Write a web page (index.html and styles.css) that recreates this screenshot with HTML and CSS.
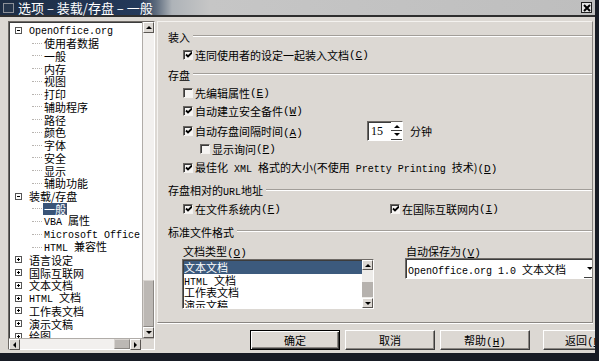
FILE: index.html
```html
<!DOCTYPE html>
<html lang="zh-CN">
<head>
  <meta charset="UTF-8" />
  <title>选项 - 装载/存盘 - 一般</title>
  <link rel="stylesheet" href="styles.css">
</head>
<body>

  <div class="window">
    <div class="titlebar">
      <span class="ticon"></span>
      <span class="ttext">选项 – 装载/存盘 – 一般</span>
      <span class="tclose">
        <svg width="8" height="8" viewBox="0 0 8 8"><path d="M1 1L7 7M7 1L1 7" stroke="#000" stroke-width="2"/></svg>
      </span>
    </div>

    <div class="client">
      <!-- Pohon kategori kiri -->
      <div class="tree">
        <div class="tree-body">
          <ul class="nodes">
            <li class="root"><svg class="exp" width="7" height="7" viewBox="0 0 7 7"><rect x=".5" y=".5" width="6" height="6" fill="#fff" stroke="#555"/><path d="M2 3.5h3" stroke="#000"/></svg><span class="t"><span class="lat">OpenOffice.org</span></span></li>
            <li class="child"><span class="ln"></span><span class="t">使用者数据</span></li>
            <li class="child"><span class="ln"></span><span class="t">一般</span></li>
            <li class="child"><span class="ln"></span><span class="t">内存</span></li>
            <li class="child"><span class="ln"></span><span class="t">视图</span></li>
            <li class="child"><span class="ln"></span><span class="t">打印</span></li>
            <li class="child"><span class="ln"></span><span class="t">辅助程序</span></li>
            <li class="child"><span class="ln"></span><span class="t">路径</span></li>
            <li class="child"><span class="ln"></span><span class="t">颜色</span></li>
            <li class="child"><span class="ln"></span><span class="t">字体</span></li>
            <li class="child"><span class="ln"></span><span class="t">安全</span></li>
            <li class="child"><span class="ln"></span><span class="t">显示</span></li>
            <li class="child"><span class="ln"></span><span class="t">辅助功能</span></li>
            <li class="root"><svg class="exp" width="7" height="7" viewBox="0 0 7 7"><rect x=".5" y=".5" width="6" height="6" fill="#fff" stroke="#555"/><path d="M2 3.5h3" stroke="#000"/></svg><span class="t">装载/存盘</span></li>
            <li class="child"><span class="ln"></span><span class="t sel">一般</span></li>
            <li class="child"><span class="ln"></span><span class="t"><span class="lat">VBA&nbsp;</span>属性</span></li>
            <li class="child"><span class="ln"></span><span class="t"><span class="lat">Microsoft Office</span></span></li>
            <li class="child"><span class="ln"></span><span class="t"><span class="lat">HTML&nbsp;</span>兼容性</span></li>
            <li class="root"><svg class="exp" width="7" height="7" viewBox="0 0 7 7"><rect x=".5" y=".5" width="6" height="6" fill="#fff" stroke="#555"/><path d="M2 3.5h3M3.5 2v3" stroke="#000"/></svg><span class="t">语言设定</span></li>
            <li class="root"><svg class="exp" width="7" height="7" viewBox="0 0 7 7"><rect x=".5" y=".5" width="6" height="6" fill="#fff" stroke="#555"/><path d="M2 3.5h3M3.5 2v3" stroke="#000"/></svg><span class="t">国际互联网</span></li>
            <li class="root"><svg class="exp" width="7" height="7" viewBox="0 0 7 7"><rect x=".5" y=".5" width="6" height="6" fill="#fff" stroke="#555"/><path d="M2 3.5h3M3.5 2v3" stroke="#000"/></svg><span class="t">文本文档</span></li>
            <li class="root"><svg class="exp" width="7" height="7" viewBox="0 0 7 7"><rect x=".5" y=".5" width="6" height="6" fill="#fff" stroke="#555"/><path d="M2 3.5h3M3.5 2v3" stroke="#000"/></svg><span class="t"><span class="lat">HTML&nbsp;</span>文档</span></li>
            <li class="root"><svg class="exp" width="7" height="7" viewBox="0 0 7 7"><rect x=".5" y=".5" width="6" height="6" fill="#fff" stroke="#555"/><path d="M2 3.5h3M3.5 2v3" stroke="#000"/></svg><span class="t">工作表文档</span></li>
            <li class="root"><svg class="exp" width="7" height="7" viewBox="0 0 7 7"><rect x=".5" y=".5" width="6" height="6" fill="#fff" stroke="#555"/><path d="M2 3.5h3M3.5 2v3" stroke="#000"/></svg><span class="t">演示文稿</span></li>
            <li class="root"><svg class="exp" width="7" height="7" viewBox="0 0 7 7"><rect x=".5" y=".5" width="6" height="6" fill="#fff" stroke="#555"/><path d="M2 3.5h3M3.5 2v3" stroke="#000"/></svg><span class="t">绘图</span></li>
          </ul>
          <div class="vscroll">
            <span class="sbtn"><i class="up"></i></span>
            <span class="vtrack"><span class="vthumb"></span></span>
            <span class="sbtn"><i class="down"></i></span>
          </div>
        </div>
        <div class="hscroll">
          <span class="sbtn"><i class="left"></i></span>
          <span class="htrack"><span class="hthumb"></span></span>
          <span class="sbtn"><i class="right"></i></span>
          <span class="corner"></span>
        </div>
      </div>

      <div class="side">
        <!-- Halaman opsi -->
        <div class="page">
          <div class="group">装入</div>
          <div class="opt"><span class="cb on"></span>连同使用者的设定一起装入文档<span class="k">(<u>C</u>)</span></div>

          <div class="group g-save">存盘</div>
          <div class="opt"><span class="cb"></span>先编辑属性<span class="k">(<u>E</u>)</span></div>
          <div class="opt"><span class="cb on"></span>自动建立安全备件<span class="k">(<u>W</u>)</span></div>
          <div class="opt o-auto">
            <span class="cb on"></span><span class="lbl">自动存盘间隔时间<span class="k">(<u>A</u>)</span></span>
            <span class="spin"><span class="val">15</span><span class="arrows"><i class="up"></i><i class="down"></i></span></span>
            <span class="unit">分钟</span>
          </div>
          <div class="opt sub"><span class="cb"></span>显示询问<span class="k">(<u>P</u>)</span></div>
          <div class="opt o-xml"><span class="cb on"></span><span class="t">最佳化<span class="lat">&nbsp;XML&nbsp;</span>格式的大小(不使用<span class="lat">&nbsp;Pretty Printing&nbsp;</span>技术)<span class="k">(<u>D</u>)</span></span></div>

          <div class="group g-url"><span class="t">存盘相对的<span class="lat">URL</span>地址</span></div>
          <div class="cols">
            <div class="opt"><span class="cb on"></span>在文件系统内<span class="k">(<u>F</u>)</span></div>
            <div class="opt"><span class="cb on"></span>在国际互联网内<span class="k">(<u>I</u>)</span></div>
          </div>

          <div class="group g-std">标准文件格式</div>
          <div class="fields">
            <div class="field">
              <div class="flabel">文档类型<span class="k">(<u>O</u>)</span></div>
              <div class="listbox">
                <ul class="items">
                  <li class="picked">文本文档</li>
                  <li><span class="lat">HTML&nbsp;</span>文档</li>
                  <li>工作表文档</li>
                  <li>演示文稿</li>
                </ul>
                <div class="lscroll">
                  <span class="sbtn"><i class="up"></i></span>
                  <span class="ltrack"><span class="lthumb"></span></span>
                  <span class="sbtn"><i class="down"></i></span>
                </div>
              </div>
            </div>
            <div class="field">
              <div class="flabel">自动保存为<span class="k">(<u>V</u>)</span></div>
              <div class="combo">
                <span class="ctext"><span class="lat">OpenOffice.org 1.0&nbsp;</span>文本文档</span>
                <span class="carrow"><i class="down"></i></span>
              </div>
            </div>
          </div>
        </div>

        <div class="buttons">
          <button class="btn default">确定</button>
          <button class="btn">取消</button>
          <button class="btn">帮助<span class="k">(<u>H</u>)</span></button>
          <button class="btn last">返回<span class="k">(<u>R</u>)</span></button>
        </div>
      </div>
    </div>
  </div>

</body>
</html>
```

FILE: styles.css
```css
/* Global */
* {
  box-sizing: border-box;
}
body {
  margin: 0;
  width: 599px;
  height: 361px;
  overflow: hidden;
  background-color: #171b24;
  font-family: "Noto Sans CJK SC", sans-serif;
  font-size: 11px;
  color: #000;
}
ul {
  margin: 0;
  padding: 0;
  list-style: none;
}
.lat {
  font-family: "Liberation Mono", monospace;
  font-size: 10px;
}
.k {
  font-family: "Liberation Mono", monospace;
  font-size: 11px;
}
.k u {
  text-underline-offset: 1px;
}

/* Jendela */
.window {
  width: 595px;
  height: 353px;
  background-color: #dcd8d3;
  overflow: hidden;
}
.titlebar {
  display: flex;
  align-items: center;
  height: 17px;
  padding: 0 2px 0 3px;
  border-bottom: 2px solid #2e2e2e;
  background: linear-gradient(to right, #1d2d44 0, #24395a 140px, #5d6b7d 156px, #aeb3b8 172px, #c6c6c6 210px, #bebebe 100%);
}
.ticon {
  width: 11px;
  height: 10px;
  border: 1px solid #8c9098;
  background-color: #26364c;
}
.ttext {
  margin-left: 4px;
  color: #fff;
  font-size: 13px;
  line-height: 15px;
}
.tclose {
  display: flex;
  align-items: center;
  justify-content: center;
  width: 11px;
  height: 11px;
  margin-left: auto;
  margin-right: 1px;
  background-color: #e4e4e4;
  border: 1px solid #202020;
}

.client {
  display: flex;
  padding: 4px 0 0 8px;
}

/* Pohon */
.tree {
  display: flex;
  flex-direction: column;
  width: 147px;
  height: 329px;
  background-color: #fff;
  border: 1px solid;
  border-color: #6e6a66 #fff #fff #6e6a66;
  box-shadow: inset 1px 1px 0 #3c3c3c;
}
.tree-body {
  display: flex;
  flex: 1;
  min-height: 0;
}
.nodes {
  flex: 1;
  overflow: hidden;
  padding-top: 2px;
  white-space: nowrap;
}
.nodes li {
  display: flex;
  align-items: center;
  height: 12.75px;
}
.t {
  line-height: 12px;
}
.root {
  padding-left: 6px;
}
.root .exp {
  margin-right: 7px;
  flex: none;
}
.child {
  padding-left: 23px;
}
.ln {
  width: 10px;
  margin-right: 2px;
  border-top: 1px dotted #b8b4b0;
}
.sel {
  background-color: #3a5477;
  color: #fff;
  padding: 0 1px;
  margin-left: -1px;
}

/* Scrollbar */
.sbtn {
  display: flex;
  align-items: center;
  justify-content: center;
  width: 11px;
  height: 11px;
  flex: none;
  background-color: #dcd8d3;
  border: 1px solid;
  border-color: #fff #5a5652 #5a5652 #fff;
}
i {
  display: block;
  width: 0;
  height: 0;
  border: 3px solid transparent;
}
i.up { border-bottom-color: #000; border-top-width: 0; }
i.down { border-top-color: #000; border-bottom-width: 0; }
i.left { border-right-color: #000; border-left-width: 0; }
i.right { border-left-color: #000; border-right-width: 0; }

.vscroll {
  display: flex;
  flex-direction: column;
  width: 12px;
  border-left: 1px solid #b0aca8;
}
.vscroll .sbtn,
.hscroll .sbtn {
  width: 11px;
}
.vtrack {
  flex: 1;
  display: flex;
  flex-direction: column;
  justify-content: flex-end;
  background-color: #f2f0ee;
}
.vthumb {
  height: 47px;
  background-color: #bcb8b4;
  border: 1px solid;
  border-color: #d8d4d0 #8a8682 #8a8682 #d8d4d0;
}
.hscroll {
  display: flex;
  height: 11px;
  border-top: 1px solid #b0aca8;
}
.htrack {
  flex: 1;
  display: flex;
  justify-content: flex-end;
  background-color: #f2f0ee;
}
.hthumb {
  width: 16px;
  background-color: #bcb8b4;
  border: 1px solid;
  border-color: #d8d4d0 #8a8682 #8a8682 #d8d4d0;
}
.corner {
  width: 13px;
  background-color: #dcd8d3;
}

/* Sisi kanan */
.side {
  display: flex;
  flex-direction: column;
  width: 436px;
  margin-left: 2px;
}
.page {
  height: 302px;
  padding: 6px 0 0 10px;
  overflow: hidden;
  border: 1px solid;
  border-color: #f4f2ef #8a8682 #8a8682 #f4f2ef;
  box-shadow: 0 1px 0 #fff;
}
.group {
  display: flex;
  align-items: center;
  height: 18px;
  white-space: nowrap;
}
.group::after {
  content: "";
  flex: 1;
  margin: -2px 0 0 3px;
  border-top: 1px solid #a29e99;
  border-bottom: 1px solid #fff;
}
.g-save { margin-top: 2px; }
.g-url { margin-top: 5px; }
.g-std { margin-top: 5px; }

.opt {
  display: flex;
  align-items: center;
  height: 18px;
  padding-left: 15px;
  white-space: nowrap;
}
.opt.sub {
  padding-left: 32px;
}
.o-auto {
  margin-top: 2px;
}
.o-xml {
  margin-top: 1px;
}
.cb {
  width: 10px;
  height: 10px;
  margin-right: 2px;
  flex: none;
  background-color: #f6f4f2;
  border: 1px solid;
  border-color: #6a6662 #f4f2ef #f4f2ef #6a6662;
  box-shadow: inset 1px 1px 0 #3a3a3a;
}
.cb.on {
  background: #f6f4f2 url("data:image/svg+xml,%3Csvg xmlns='http://www.w3.org/2000/svg' width='8' height='8'%3E%3Cpath d='M1 3.5L3 5.5L7 1.5' fill='none' stroke='%23000' stroke-width='1.8'/%3E%3C/svg%3E") no-repeat 1px 0;
}
.lbl {
  width: 172px;
}
.spin {
  display: flex;
  width: 36px;
  height: 20px;
  background-color: #fff;
  border: 1px solid;
  border-color: #6e6a66 #fff #fff #6e6a66;
  box-shadow: inset 1px 1px 0 #3c3c3c;
}
.spin .val {
  flex: 1;
  padding: 2px 0 0 3px;
  font-family: "Liberation Serif", serif;
  font-size: 12px;
}
.spin .arrows {
  display: flex;
  flex-direction: column;
  align-items: center;
  justify-content: space-around;
  width: 11px;
  border-bottom: 1px solid #404040;
  background: linear-gradient(#fff 0 8px, #404040 8px 9px, #fff 9px);
}
.unit {
  margin-left: 7px;
}

.cols {
  display: grid;
  grid-template-columns: 222px 1fr;
}
.cols .opt {
  padding-left: 15px;
}
.cols .opt + .opt {
  padding-left: 0;
}

.fields {
  display: grid;
  grid-template-columns: 223px 1fr;
  margin-top: 1px;
  padding-left: 14px;
}
.flabel {
  height: 19px;
  line-height: 19px;
  padding-left: 1px;
}
.listbox {
  display: flex;
  width: 192px;
  height: 50px;
  margin-top: -2px;
  background-color: #fff;
  border: 1px solid;
  border-color: #6e6a66 #fff #fff #6e6a66;
  box-shadow: inset 1px 1px 0 #3c3c3c;
}
.items {
  flex: 1;
  overflow: hidden;
  padding: 1px 0 0 1px;
  white-space: nowrap;
}
.items li {
  height: 12.5px;
  line-height: 12px;
}
.items .picked {
  background-color: #3c5a7d;
  color: #fff;
}
.lscroll {
  display: flex;
  flex-direction: column;
  width: 11px;
}
.lscroll .sbtn {
  width: 11px;
  height: 10px;
}
.ltrack {
  flex: 1;
  display: flex;
  flex-direction: column;
  justify-content: center;
  background-color: #eeece9;
}
.lthumb {
  height: 15px;
  margin-top: 10px;
  background-color: #b6b2ae;
}
.combo {
  display: flex;
  align-items: center;
  width: 192px;
  height: 21px;
  margin-top: -3px;
  background-color: #fff;
  border: 1px solid;
  border-color: #6e6a66 #fff #fff #6e6a66;
  box-shadow: inset 1px 1px 0 #3c3c3c;
}
.ctext {
  flex: 1;
  padding-left: 2px;
  white-space: nowrap;
}
.carrow {
  display: flex;
  align-items: center;
  justify-content: center;
  width: 12px;
  height: 100%;
  border-bottom: 1px solid #404040;
}

/* Tombol */
.buttons {
  display: flex;
  gap: 5px;
  padding: 7px 0 0 93px;
}
.btn {
  width: 90px;
  height: 20px;
  flex: none;
  padding: 0;
  font-family: "Noto Sans CJK SC", sans-serif;
  font-size: 11px;
  color: #000;
  background-color: #dcd8d3;
  border: 1px solid;
  border-color: #fff #3c3c3c #3c3c3c #fff;
  box-shadow: inset -1px -1px 0 #8a8682;
}
.btn.default {
  border-color: #000;
  box-shadow: inset 1px 1px 0 #fff, inset -1px -1px 0 #3c3c3c, inset -2px -2px 0 #8a8682;
}
.btn.last {
  margin-left: 8px;
  text-align: left;
  padding-left: 21px;
}
```
